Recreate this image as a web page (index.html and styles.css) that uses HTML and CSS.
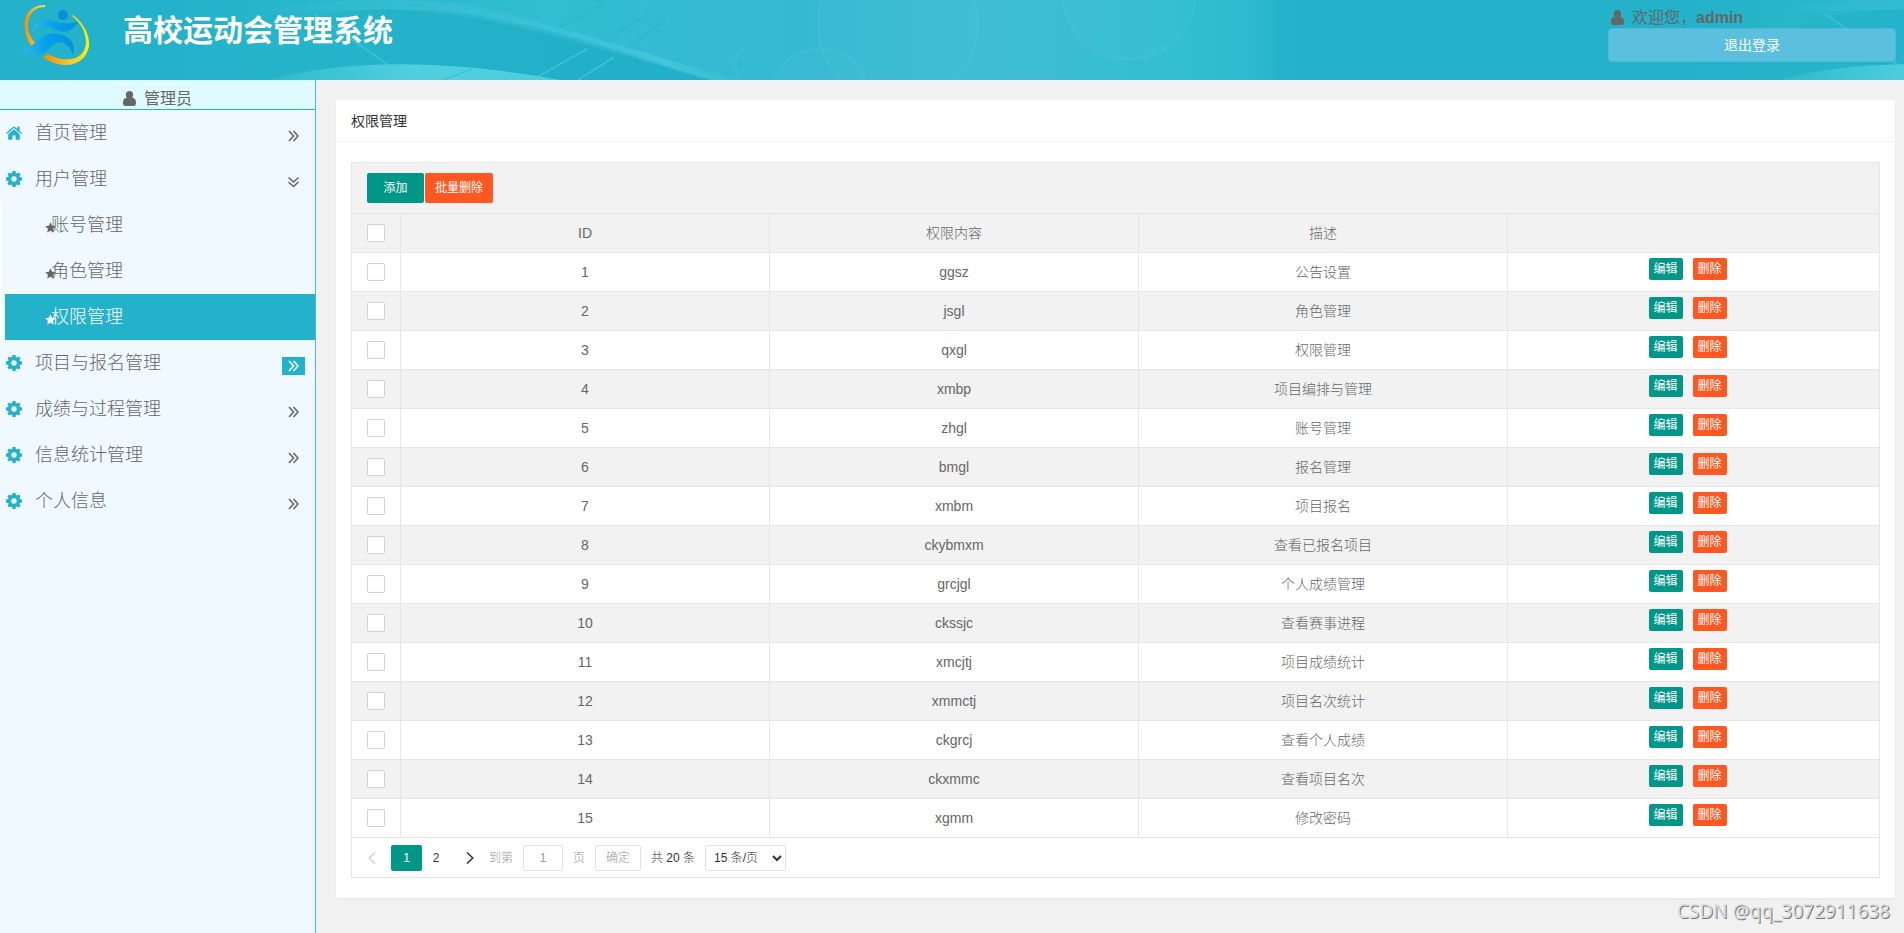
FILE: index.html
```html
<!DOCTYPE html>
<html lang="zh-CN">
<head>
<meta charset="utf-8">
<title>高校运动会管理系统</title>
<link rel="stylesheet" href="styles.css">
</head>
<body>
<svg class="defs" width="0" height="0" aria-hidden="true">
  <symbol id="i-user" viewBox="0 0 13 15"><path d="M6.500 0C8.700 0 10.200 1.500 10.200 3.800C10.200 5 9.800 6 9.200 6.800C11.900 7.100 13 8.900 13 12C13 14.200 12 15 10.500 15H2.500C1 15 0 14.200 0 12C0 8.900 1.100 7.100 3.800 6.800C3.200 6 2.800 5 2.800 3.800C2.800 1.500 4.300 0 6.500 0Z"/></symbol>
  <symbol id="i-home" viewBox="0 0 16 14"><path d="M8 3.300L13.800 8.200V13.200Q13.800 13.800 13.200 13.800H9.600V9.500H6.400V13.800H2.800Q2.200 13.800 2.200 13.200V8.200Z"/><path d="M0 7L7.300 .8Q8 .3 8.700 .8L11.300 3V.8H13.600V5L16 7L15.200 7.900L8 1.900L.8 7.900Z"/></symbol>
  <symbol id="i-gear" viewBox="0 0 16 16"><path fill-rule="evenodd" d="M6.500 0H9.500L9.900 2.100L11 2.600L12.800 1.400L14.600 3.200L13.400 5L13.900 6.100L16 6.500V9.500L13.900 9.900L13.400 11L14.600 12.800L12.800 14.600L11 13.400L9.900 13.900L9.500 16H6.500L6.100 13.900L5 13.400L3.200 14.600L1.400 12.800L2.600 11L2.100 9.900L0 9.500V6.500L2.100 6.100L2.600 5L1.400 3.200L3.200 1.400L5 2.600L6.100 2.100ZM8 5.300A2.700 2.700 0 1 0 8 10.700A2.700 2.700 0 1 0 8 5.300Z"/></symbol>
  <symbol id="i-star" viewBox="0 0 12 12"><path d="M6 .3L7.700 4.100L11.800 4.600L8.800 7.400L9.600 11.500L6 9.500L2.400 11.500L3.200 7.400L.2 4.600L4.300 4.100Z"/></symbol>
  <symbol id="i-chev" viewBox="0 0 11 12"><path d="M1 1L5.500 6L1 11M5.500 1L10 6L5.500 11" fill="none" stroke="currentColor" stroke-width="1.600"/></symbol>
  <symbol id="i-arrow" viewBox="0 0 8 12"><path d="M1 .5L6.800 6L1 11.500" fill="none" stroke="currentColor" stroke-width="1.500"/></symbol>
</svg>

<header class="banner">
  <svg class="banner-art" aria-hidden="true">
    <defs>
      <linearGradient id="g-glow" x1="0" x2="1"><stop offset="0" stop-color="#30bdd2" stop-opacity="0"/><stop offset=".3" stop-color="#30bdd2"/><stop offset=".58" stop-color="#36b9d3"/><stop offset=".72" stop-color="#40bdd6"/><stop offset=".88" stop-color="#33bed2"/><stop offset=".96" stop-color="#2dbad0"/><stop offset="1" stop-color="#23b2c9" stop-opacity="0"/></linearGradient>
      <linearGradient id="g-band" x1="0" x2="1"><stop offset="0" stop-color="#4fc8dc" stop-opacity="0"/><stop offset=".5" stop-color="#3fc3d7" stop-opacity=".6"/><stop offset=".85" stop-color="#4bcade"/><stop offset="1" stop-color="#3ec0d6" stop-opacity=".4"/></linearGradient>
      <linearGradient id="g-hill" x1="0" x2="1"><stop offset="0" stop-color="#2fbace"/><stop offset=".5" stop-color="#50d0de"/><stop offset="1" stop-color="#4dcedc"/></linearGradient>
      <linearGradient id="g-deep" x1="0" x2="1"><stop offset="0" stop-color="#23b2c9" stop-opacity="0"/><stop offset=".4" stop-color="#23b2c9"/><stop offset="1" stop-color="#22afc8"/></linearGradient>
      <pattern id="waves" width="1510" height="80" patternUnits="userSpaceOnUse">
        <rect width="1510" height="80" fill="#23b2c9"/>
        <rect x="180" width="1120" height="80" fill="url(#g-glow)"/>
        <path d="M240 12C330 -4 420 -2 480 7C570 28 650 56 740 80H640C560 40 500 16 420 10C350 8 290 14 240 12Z" fill="url(#g-band)" opacity=".75"/>
        <path d="M200 80C240 25 340 8 400 9C440 9 480 14 500 20C580 36 650 62 712 80Z" fill="url(#g-deep)"/>
        <path d="M370 9C430 7 470 8 500 15C590 38 670 62 735 80H708C640 60 570 38 490 21C450 13 410 9 370 9Z" fill="#3cc1d5" opacity=".45"/>
        <path d="M270 80C340 60 440 58 560 80Z" fill="url(#g-hill)"/>
        <path d="M315 14L410 80M532 80L587 49M578 80L614 57" fill="none" stroke="#50cbdd" stroke-opacity=".6" stroke-width="1.500"/>
        <path d="M559 28L602 5M602 42L648 14M625 49L666 19M443 80L472 69" fill="none" stroke="#23a9c4" stroke-opacity=".6"/>
        <g fill="#5cc5de" fill-opacity=".06" stroke="#5acbda" stroke-opacity=".45"><circle cx="898" cy="25" r="80"/><circle cx="820" cy="97" r="49"/><circle cx="1129" cy="-8" r="67"/></g>
        <path d="M711 38Q735 57 739 80M735 60L750 38" fill="none" stroke="#5acbda" stroke-opacity=".4"/>
      </pattern>
    </defs>
    <rect width="100%" height="80" fill="url(#waves)"/>
  </svg>
  <svg class="logo" viewBox="0 0 70 62" role="img" aria-label="logo">
    <defs>
      <linearGradient id="g-ring" x1="0" x2="1"><stop offset="0" stop-color="#f08c0a"/><stop offset=".6" stop-color="#fcc92c"/><stop offset="1" stop-color="#fff000"/></linearGradient>
      <linearGradient id="g-run" x1="0" x2="1"><stop offset="0" stop-color="#38b6ea"/><stop offset=".5" stop-color="#02a0ea"/><stop offset="1" stop-color="#0a8ee0"/></linearGradient>
    </defs>
    <path d="M25 1C9 1 3 13 5 25C6 34 9 40 13 43L16 40C11 34 7 28 8 19C9 9 15 3 25 3Z" fill="url(#g-ring)"/>
    <path d="M53 11C64 19 70 32 69 42C67 55 56 62 43 61C34 60 27 56 23 53L28 50C36 54 41 56 49 55C59 55 65 49 66 39C66 28 61 19 52 12Z" fill="url(#g-ring)"/>
    <circle cx="43" cy="11" r="5" fill="#088ed8"/>
    <path d="M12 28C14 18 21 14 30 16C41 20 47 20 58 18C52 27 45 30 36 26C26 21 18 21 12 28Z" fill="url(#g-run)"/>
    <path d="M1 46C13 45 18 32 29 30C43 28 58 35 53 52C50 39 40 35 32 42C24 50 15 55 1 46Z" fill="url(#g-run)"/>
  </svg>
  <h1 class="title">高校运动会管理系统</h1>
  <div class="account">
    <p class="welcome"><svg class="ico-user"><use href="#i-user"/></svg><span>欢迎您，<b>admin</b></span></p>
    <button class="logout" type="button">退出登录</button>
  </div>
</header>

<div class="layout">
  <nav class="sidebar">
    <div class="role"><svg class="ico-user"><use href="#i-user"/></svg><span>管理员</span></div>
    <ul class="menu">
      <li><a class="item" href="#"><svg class="ico"><use href="#i-home"/></svg><span>首页管理</span><i class="more"><svg><use href="#i-chev"/></svg></i></a></li>
      <li><a class="item" href="#"><svg class="ico"><use href="#i-gear"/></svg><span>用户管理</span><i class="more open"><svg><use href="#i-chev"/></svg></i></a>
        <ul class="submenu">
          <li><a class="subitem" href="#"><svg><use href="#i-star"/></svg><span>账号管理</span></a></li>
          <li><a class="subitem" href="#"><svg><use href="#i-star"/></svg><span>角色管理</span></a></li>
          <li><a class="subitem active" href="#"><svg><use href="#i-star"/></svg><span>权限管理</span></a></li>
        </ul></li>
      <li><a class="item" href="#"><svg class="ico"><use href="#i-gear"/></svg><span>项目与报名管理</span><i class="more lit"><svg><use href="#i-chev"/></svg></i></a></li>
      <li><a class="item" href="#"><svg class="ico"><use href="#i-gear"/></svg><span>成绩与过程管理</span><i class="more"><svg><use href="#i-chev"/></svg></i></a></li>
      <li><a class="item" href="#"><svg class="ico"><use href="#i-gear"/></svg><span>信息统计管理</span><i class="more"><svg><use href="#i-chev"/></svg></i></a></li>
      <li><a class="item" href="#"><svg class="ico"><use href="#i-gear"/></svg><span>个人信息</span><i class="more"><svg><use href="#i-chev"/></svg></i></a></li>
    </ul>
  </nav>

  <main class="content">
    <section class="card">
      <h2 class="card-title">权限管理</h2>
      <div class="card-body">
        <div class="grid">
          <div class="toolbar"><button class="btn add" type="button">添加</button><button class="btn danger" type="button">批量删除</button></div>
          <table class="table">
            <colgroup><col class="c-check"><col><col><col><col class="c-last"></colgroup>
            <thead><tr><th><input type="checkbox" aria-label="全选"></th><th>ID</th><th>权限内容</th><th>描述</th><th></th></tr></thead>
            <tbody id="rows"></tbody>
          </table>
          <div class="pager">
            <button class="step prev" type="button" aria-label="上一页" disabled><svg><use href="#i-arrow"/></svg></button>
            <button class="page current" type="button">1</button>
            <button class="page" type="button">2</button>
            <button class="step" type="button" aria-label="下一页"><svg><use href="#i-arrow"/></svg></button>
            <label class="dim" for="goto">到第</label>
            <input class="goto" id="goto" type="text" value="1">
            <span class="dim">页</span>
            <button class="go" type="button">确定</button>
            <span class="total">共 20 条</span>
            <select class="size" aria-label="每页条数"><option>15 条/页</option></select>
          </div>
        </div>
      </div>
    </section>
  </main>
</div>
<div class="watermark">CSDN @qq_3072911638</div>
<script src="rows.js"></script>
</body>
</html>
```
FILE: rows.js
```js
const rows = [
  ["ggsz", "公告设置"], ["jsgl", "角色管理"], ["qxgl", "权限管理"], ["xmbp", "项目编排与管理"],
  ["zhgl", "账号管理"], ["bmgl", "报名管理"], ["xmbm", "项目报名"], ["ckybmxm", "查看已报名项目"],
  ["grcjgl", "个人成绩管理"], ["ckssjc", "查看赛事进程"], ["xmcjtj", "项目成绩统计"], ["xmmctj", "项目名次统计"],
  ["ckgrcj", "查看个人成绩"], ["ckxmmc", "查看项目名次"], ["xgmm", "修改密码"]
];
document.getElementById("rows").innerHTML = rows.map(([code, text], i) =>
  `<tr><td><input type="checkbox" aria-label="选择 ${i + 1}"></td><td>${i + 1}</td><td>${code}</td><td>${text}</td>` +
  `<td><div class="ops"><button class="mini" type="button">编辑</button><button class="mini danger" type="button">删除</button></div></td></tr>`
).join("");
```
FILE: styles.css
```css
* { box-sizing: border-box; margin: 0; padding: 0; }
body {
  display: flex;
  flex-direction: column;
  min-height: 100vh;
  background: #f1f1f1;
  color: #666;
  font: 300 14px/24px "Liberation Sans", "Noto Sans CJK SC", sans-serif;
}
button, input, select { font: inherit; color: inherit; }
svg { flex: none; fill: currentColor; }
ul { list-style: none; }
a { color: inherit; text-decoration: none; }
.defs { position: absolute; }

.banner { position: relative; display: flex; height: 80px; background: #23b2c9; overflow: hidden; }
.banner-art { position: absolute; inset: 0; width: 100%; height: 80px; }
.logo { position: relative; width: 70px; height: 62px; margin: 4px 33px 0 20px; }
.title { position: relative; flex: 1; padding-top: 9px; color: #fff; font-size: 30px; font-weight: 700; line-height: 44px; }
.account { position: relative; width: 288px; margin-right: 8px; padding-top: 5px; }
.welcome { display: flex; align-items: center; gap: 8px; height: 23px; padding: 2px 0 0 3px; font-size: 16px; font-weight: 400; }
.ico-user { width: 13px; height: 15px; }
.logout {
  display: block; width: 100%; height: 34px; border: 1px solid #4db8dc; border-radius: 4px;
  background: #5bc0de; color: #fff; font-size: 14px; font-weight: 400;
}

.layout { display: flex; flex: 1; }
.sidebar { width: 316px; flex: none; border-right: 1px solid #4bb9cd; background: #f0f9ff; }
.role {
  display: flex; justify-content: center; gap: 8px; align-items: center; height: 30px; padding-top: 9px;
  border-bottom: 1px solid #23b2c9; background: #e0fbff; font-size: 16px; font-weight: 400;
}
.role .ico-user { margin-bottom: 2px; }
.item { display: flex; align-items: center; height: 46px; padding: 0 10px 0 6px; font-size: 18px; }
.item span { flex: 1; padding-left: 13px; }
.ico { width: 16px; height: 16px; color: #23b2c9; }
.more { display: flex; align-items: center; justify-content: center; width: 23px; height: 18px; margin-top: 6px; }
.more svg { width: 11px; height: 12px; }
.open svg { transform: rotate(90deg); }
.lit { background: #23b2c9; color: #fff; }
.submenu { border-left: 2px solid #fff; padding-left: 3px; }
.subitem { display: flex; align-items: center; height: 46px; padding-left: 40px; font-size: 18px; }
.subitem svg { width: 11px; height: 11px; margin: 4px -5px 0 0; }
.active { background: #23b2c9; color: #fff; }

.content { flex: 1; min-width: 0; padding: 20px 9px 35px 20px; }
.card { border-radius: 2px; background: #fff; box-shadow: 0 1px 2px rgba(0, 0, 0, .05); }
.card-title { height: 42px; padding: 0 15px; border-bottom: 1px solid #f6f6f6; color: #333; font-size: 14px; font-weight: 400; line-height: 42px; }
.card-body { padding: 20px 15px; }
.grid { border: 1px solid #e6e6e6; }
.toolbar { display: flex; gap: 1px; height: 51px; padding: 10px 15px; border-bottom: 1px solid #e6e6e6; background: #f2f2f2; }
.btn { height: 30px; border: 0; padding: 0 10px; border-radius: 2px; background: #009688; color: #fff; font-size: 12px; font-weight: 400; }
.add { width: 57px; }
.danger { background: #ff5722; }
.table { width: 100%; border-collapse: separate; border-spacing: 0; table-layout: fixed; }
.c-check { width: 49px; }
.c-last { width: 371px; }
.table th, .table td { height: 39px; border: solid #e6e6e6; border-width: 0 1px 1px 0; text-align: center; font-weight: 300; line-height: 38px; }
.table th:last-child, .table td:last-child { border-right: 0; }
.table thead tr, .table tbody tr:nth-child(even) { background: #f2f2f2; }
.table input { display: block; width: 18px; height: 18px; margin: 0 15px; appearance: none; border: 1px solid #d2d2d2; border-radius: 2px; background: #fff; }
.ops { display: flex; justify-content: center; gap: 10px; height: 38px; padding: 5px 12px 0 0; }
.mini { width: 34px; height: 22px; border: 0; border-radius: 2px; background: #009688; color: #fff; font-size: 12px; font-weight: 400; line-height: 22px; }
.mini.danger { background: #ff5722; }
.pager { display: flex; align-items: center; height: 39px; padding: 0 7px; color: #333; font-size: 12px; }
.step { display: flex; justify-content: center; align-items: center; width: 32px; height: 26px; border: 0; background: none; }
.step svg { width: 8px; height: 12px; }
.prev { width: 26px; margin-right: 6px; color: #d2d2d2; }
.prev svg { transform: scaleX(-1); }
.page { width: 31px; height: 26px; border: 0; border-radius: 2px; background: none; }
.page + .page { width: 28px; margin-right: 4px; }
.current { background: #009688; color: #fff; }
.dim { color: #999; }
.step + .dim { margin-left: 3px; }
.goto { width: 40px; height: 26px; margin: 0 10px; border: 1px solid #e2e2e2; border-radius: 2px; color: #999; text-align: center; }
.go { width: 46px; height: 26px; margin: 0 10px; border: 1px solid #e2e2e2; border-radius: 2px; background: #fff; color: #999; }
.size { width: 81px; height: 26px; margin-left: 10px; padding: 0 4px; border: 1px solid #e2e2e2; border-radius: 2px; background: #fff; }
.watermark { position: absolute; right: 14px; bottom: 8px; color: #ddd; font: 400 19px/28px "Noto Sans", sans-serif; text-shadow: 1px 1px 0 #777; }
```
